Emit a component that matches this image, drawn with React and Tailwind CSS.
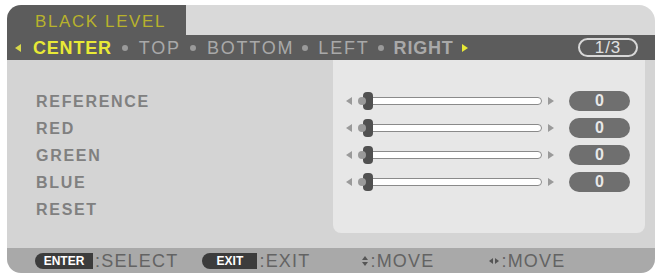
import React from "react";

const font = { fontFamily: '"Liberation Sans", Arial, sans-serif' };

function Slider() {
  return (
    <div className="flex h-[27px] items-center">
      <div className="w-0 h-0 border-y-[4px] border-y-transparent border-r-[6px] border-r-[#9a9a9a] ml-[13px]" />
      <div className="relative ml-[10px] w-[180px] h-[20px] flex items-center">
        <div className="w-full h-[8px] rounded-full bg-white border border-[#8a8a8a] ml-[5px]" />
        <div className="absolute left-[1px] top-[1px] w-[10px] h-[18px] rounded-[4px] bg-[#505050]" />
        <div className="absolute left-[-4px] top-[6px] w-[8px] h-[8px] rounded-full bg-[#9a9a9a]" />
      </div>
      <div className="w-0 h-0 border-y-[4px] border-y-transparent border-l-[6px] border-l-[#9a9a9a] ml-[6px]" />
      <div className="ml-[15px] w-[61px] h-[20px] rounded-full bg-[#6f6f6f] flex items-center justify-center text-[#e8e8e8] text-[16px] font-bold">
        0
      </div>
    </div>
  );
}

function KeyPill({ children, w }) {
  return (
    <div className={`${w} h-[16px] rounded-l-full rounded-r-[7px] bg-[#3c3c3c] text-white text-[12px] font-bold flex items-center justify-center tracking-normal`}>
      {children}
    </div>
  );
}

export default function App() {
  return (
    <div className="w-[660px] h-[279px] bg-white" style={font}>
      <div className="pt-[5px] pl-[7px]">
        <div className="w-[648px] h-[268px] flex flex-col">
          {/* Top row */}
          <div className="flex h-[30px]">
            <div className="w-[179px] bg-[#5c5c5c] rounded-tl-[14px] flex items-center pt-[3px] pl-[28px]">
              <span className="text-[#b8b22c] text-[17px] tracking-[1.6px] leading-none">BLACK LEVEL</span>
            </div>
            <div className="flex-1 bg-[#d9d9d9] rounded-tr-[16px]" />
          </div>
          {/* Nav bar */}
          <div className="h-[25px] bg-[#5c5c5c] flex items-center text-[18px] leading-none">
            <div className="w-0 h-0 border-y-[4px] border-y-transparent border-r-[6px] border-r-[#d8d84a] ml-[8px]" />
            <span className="text-[#e8e936] ml-[12px] tracking-[0.8px] font-bold">CENTER</span>
            <span className="w-[6px] h-[6px] rounded-full bg-[#9a9a9a] ml-[10px]" />
            <span className="text-[#a9a9a9] ml-[11px] tracking-[1.8px]">TOP</span>
            <span className="w-[6px] h-[6px] rounded-full bg-[#9a9a9a] ml-[9px]" />
            <span className="text-[#a9a9a9] ml-[11px] tracking-[1.8px]">BOTTOM</span>
            <span className="w-[6px] h-[6px] rounded-full bg-[#9a9a9a] ml-[8px]" />
            <span className="text-[#a9a9a9] ml-[10px] tracking-[1.8px]">LEFT</span>
            <span className="w-[6px] h-[6px] rounded-full bg-[#9a9a9a] ml-[8px]" />
            <span className="text-[#a9a9a9] ml-[10px] tracking-[0.8px] font-bold">RIGHT</span>
            <div className="w-0 h-0 border-y-[4px] border-y-transparent border-l-[6px] border-l-[#e8e936] ml-[8px]" />
            <div className="ml-auto mr-[17px] w-[60px] h-[19px] rounded-full border-2 border-[#d8d8d8] flex items-center justify-center text-[#e0e0e0] text-[17px] tracking-[1px]">
              1/3
            </div>
          </div>
          {/* Content */}
          <div className="flex-1 bg-[#d4d4d4] flex">
            <div className="w-[326px] pt-[28px] pl-[29px] text-[#808080] text-[16px] font-bold tracking-[1.7px] leading-none">
              {["REFERENCE", "RED", "GREEN", "BLUE", "RESET"].map((t) => (
                <div key={t} className="h-[27px] flex items-center">{t}</div>
              ))}
            </div>
            <div className="w-[312px] h-[173px] bg-[#e7e7e7] rounded-b-[8px] pt-[27px]">
              <Slider />
              <Slider />
              <Slider />
              <Slider />
            </div>
          </div>
          {/* Bottom bar */}
          <div className="h-[25px] bg-[#a9a9a9] rounded-bl-[14px] rounded-br-[14px] flex items-center text-[18px] text-[#636363] leading-none tracking-[1.2px]">
            <div className="ml-[28px]"><KeyPill w="w-[58px]">ENTER</KeyPill></div>
            <span className="ml-[2px]">:SELECT</span>
            <div className="ml-[24px]"><KeyPill w="w-[55px]">EXIT</KeyPill></div>
            <span className="ml-[2px]">:EXIT</span>
            <span className="ml-[52px] flex flex-col items-center gap-[2px] mr-[2px]">
              <span className="w-0 h-0 border-x-[3px] border-x-transparent border-b-[4px] border-b-[#555]" />
              <span className="w-0 h-0 border-x-[3px] border-x-transparent border-t-[4px] border-t-[#555]" />
            </span>
            <span>:MOVE</span>
            <span className="ml-[55px] flex items-center gap-[2px] mr-[2px]">
              <span className="w-0 h-0 border-y-[3px] border-y-transparent border-r-[4px] border-r-[#555]" />
              <span className="w-0 h-0 border-y-[3px] border-y-transparent border-l-[4px] border-l-[#555]" />
            </span>
            <span>:MOVE</span>
          </div>
        </div>
      </div>
    </div>
  );
}
